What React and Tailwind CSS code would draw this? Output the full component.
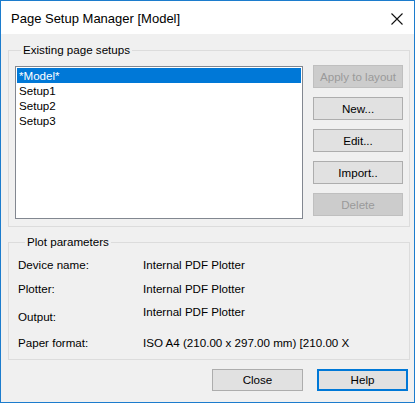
import React, { useState } from 'react';

const FONT = { fontFamily: '"Liberation Sans", Arial, sans-serif' };

const setups = ['*Model*', 'Setup1', 'Setup2', 'Setup3'];

const plotParams = [
  { label: 'Device name:', value: 'Internal PDF Plotter', cls: 'pt-[9px]' },
  { label: 'Plotter:', value: 'Internal PDF Plotter', cls: 'pt-[10px]' },
  { label: 'Output:', value: 'Internal PDF Plotter', cls: 'pt-[9px]', labelCls: 'pt-[5px]' },
  { label: 'Paper format:', value: 'ISO A4 (210.00 x 297.00 mm) [210.00 X', cls: 'pt-[12px]' },
];

const SideButton = ({ children, disabled }) => (
  <button
    disabled={disabled}
    className={`w-[90px] h-[23px] border text-[11.6px] leading-none ${
      disabled
        ? 'bg-[#cccccc] border-[#bfbfbf] text-[#9a9a9a]'
        : 'bg-[#e1e1e1] border-[#adadad] text-black'
    }`}
  >
    {children}
  </button>
);

const App = () => {
  const [selected, setSelected] = useState(0);

  return (
    <div
      style={FONT}
      className="w-[415px] h-[403px] border border-[#1c7ccd] bg-[#f0f0f0] flex flex-col text-black"
    >
      {/* Title bar */}
      <div className="h-[33px] bg-white flex items-center justify-between pl-[10px] pr-[10px] shrink-0">
        <span className="text-[13px] leading-none pt-[2px]">Page Setup Manager [Model]</span>
        <svg width="12" height="12" viewBox="0 0 12 12" className="mr-[1px] mt-[2px]">
          <path d="M0.5 0.5 L11.5 11.5 M11.5 0.5 L0.5 11.5" stroke="#111" strokeWidth="1.1" fill="none" />
        </svg>
      </div>

      <div className="flex flex-col pl-[7px] pr-[4px]">
        {/* Existing page setups */}
        <fieldset className="mt-[9px] border border-[#dcdcdc] pt-[8px] pb-[7px] pl-[6px] pr-[6px]">
          <legend className="ml-[6px] px-[2px] text-[11.6px] leading-[14px]">Existing page setups</legend>
          <div className="flex justify-between items-start">
            <div className="mt-[1px] w-[288px] h-[153px] bg-white border border-[#828790] p-[1px] text-[11.6px]">
              {setups.map((s, i) => (
                <div
                  key={s}
                  onClick={() => setSelected(i)}
                  className={`h-[15px] leading-[15px] pl-[2px] ${
                    selected === i ? 'bg-[#0078d7] text-white' : ''
                  }`}
                >
                  {s}
                </div>
              ))}
            </div>
            <div className="flex flex-col gap-[9px]">
              <SideButton disabled>Apply to layout</SideButton>
              <SideButton>New...</SideButton>
              <SideButton>Edit...</SideButton>
              <SideButton>Import..</SideButton>
              <SideButton disabled>Delete</SideButton>
            </div>
          </div>
        </fieldset>

        {/* Plot parameters */}
        <fieldset className="mt-[8px] border border-[#dcdcdc] pl-[9px] pb-[9px]">
          <legend className="ml-[7px] px-[2px] text-[11.6px] leading-[14px]">Plot parameters</legend>
          {plotParams.map((p) => (
            <div key={p.label} className={`flex text-[11.6px] leading-[14px] ${p.cls}`}>
              <span className={`w-[125px] ${p.labelCls || ''}`}>{p.label}</span>
              <span>{p.value}</span>
            </div>
          ))}
        </fieldset>

        {/* Footer buttons */}
        <div className="mt-[9px] flex justify-end gap-[14px] pr-[2px]">
          <button className="w-[91px] h-[22px] bg-[#e1e1e1] border border-[#adadad] text-[11.6px] leading-none">
            Close
          </button>
          <button className="w-[91px] h-[22px] bg-[#e1e1e1] border-2 border-[#0078d7] text-[11.6px] leading-none">
            Help
          </button>
        </div>
      </div>
    </div>
  );
};

export default App;
